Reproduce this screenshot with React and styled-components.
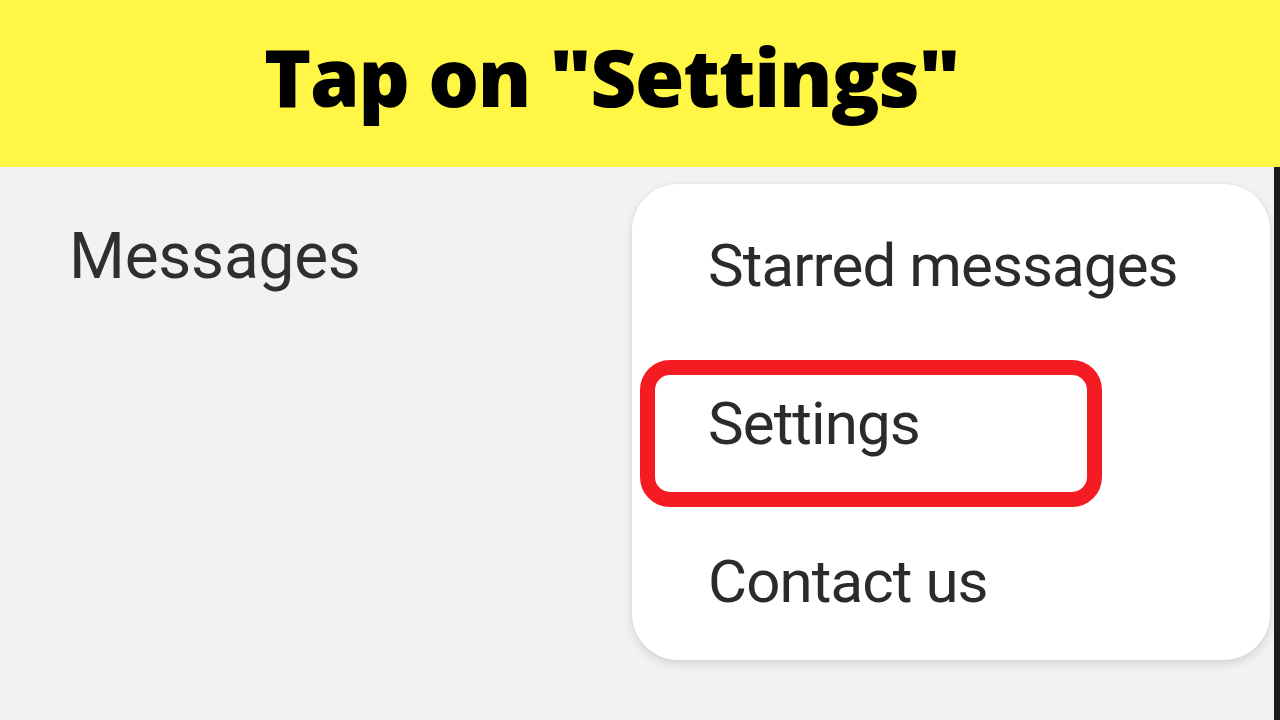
import React from 'react';
import styled, { createGlobalStyle } from 'styled-components';

const GlobalStyle = createGlobalStyle`
  html, body {
    margin: 0;
    padding: 0;
    width: 1280px;
    height: 720px;
    overflow: hidden;
    background: #f2f2f2;
  }
`;

const Page = styled.div`
  display: flex;
  flex-direction: column;
  width: 1280px;
  height: 720px;
`;

const Banner = styled.header`
  height: 167px;
  background: #fff645;
  display: flex;
  align-items: center;
  padding-left: 264px;
  box-sizing: border-box;
`;

const Title = styled.h1`
  margin: 0;
  font-family: 'Open Sans', 'Liberation Sans', sans-serif;
  font-weight: 800;
  font-size: 80px;
  letter-spacing: -1.3px;
  color: #000;
  margin-top: -16px;
`;

const Screen = styled.main`
  flex: 1;
  display: flex;
  background: #f2f2f2;
`;

const Label = styled.div`
  flex: 1;
  padding: 52px 0 0 69px;
  font-family: Roboto, 'Noto Sans', sans-serif;
  font-size: 64px;
  letter-spacing: -0.25px;
  line-height: 1.2;
  color: #2f2f2f;
  filter: blur(0.4px);
`;

const Menu = styled.div`
  width: 638px;
  height: 476px;
  margin-top: 17px;
  margin-right: 4px;
  background: #fff;
  border-radius: 46px;
  box-shadow: 0 4px 10px rgba(0, 0, 0, 0.12), 0 0 2px rgba(0, 0, 0, 0.08);
  padding-top: 3px;
  box-sizing: border-box;
  display: flex;
  flex-direction: column;
`;

const Item = styled.div`
  position: relative;
  height: 158px;
  flex-shrink: 0;
  padding-left: 76px;
  font-family: Roboto, 'Noto Sans', sans-serif;
  font-size: 60px;
  letter-spacing: -0.9px;
  line-height: 158px;
  color: #2b2b2b;
`;

const ItemText = styled.span`
  filter: blur(0.5px);
`;

const Highlight = styled.div`
  position: absolute;
  top: 15px;
  left: 8px;
  width: 462px;
  height: 147px;
  box-sizing: border-box;
  border: 15px solid #f41b22;
  border-radius: 30px;
`;

const Edge = styled.div`
  width: 6px;
  background: #1c1c1c;
`;

export default function App() {
  return (
    <Page>
      <GlobalStyle />
      <Banner>
        <Title>Tap on "Settings"</Title>
      </Banner>
      <Screen>
        <Label>Messages</Label>
        <Menu>
          <Item>
            <ItemText>Starred messages</ItemText>
          </Item>
          <Item>
            <Highlight />
            <ItemText>Settings</ItemText>
          </Item>
          <Item>
            <ItemText>Contact us</ItemText>
          </Item>
        </Menu>
        <Edge />
      </Screen>
    </Page>
  );
}
